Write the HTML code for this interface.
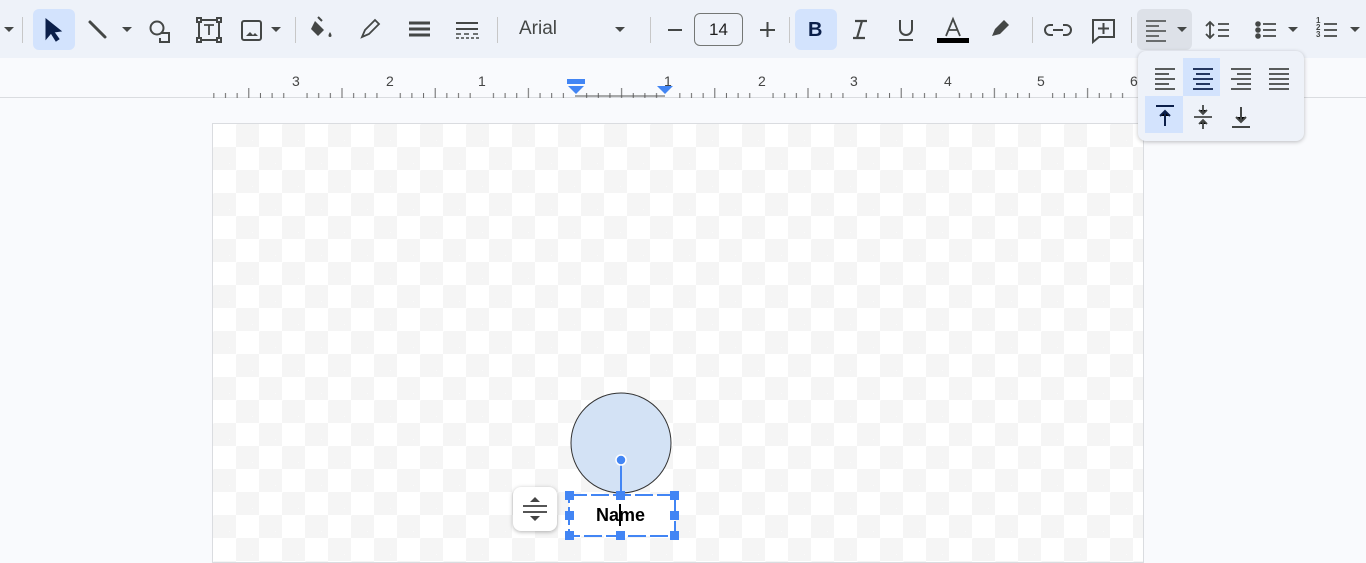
<!DOCTYPE html>
<html><head><meta charset="utf-8"><style>
*{margin:0;padding:0;box-sizing:border-box}
body{width:1366px;height:551px;overflow:hidden;background:#f9fafd;font-family:"Liberation Sans",Arial,sans-serif;position:relative}
.tb{position:absolute;left:0;top:0;width:1366px;height:58px;background:#eef2f9}
.abs{position:absolute}
.sep{position:absolute;top:17px;width:1px;height:26px;background:#c7c7c7}
.ruler{position:absolute;left:0;top:58px;width:1366px;height:40px;background:#f9fafd;border-bottom:1px solid #dadce0}
.page{position:absolute;left:212px;top:123px;width:932px;height:440px;border:1px solid #dadce0;
background-color:#fff;background-image:linear-gradient(45deg,#f5f5f5 25%,transparent 25%,transparent 75%,#f5f5f5 75%),linear-gradient(45deg,#f5f5f5 25%,transparent 25%,transparent 75%,#f5f5f5 75%);background-size:46px 46px;background-position:0 0,23px 23px}
.num{position:absolute;top:73px;font-size:14px;color:#444;}
</style></head><body>
<div class="tb"></div>
<svg class="abs" style="left:0;top:0" width="1366" height="58" fill="none" stroke="#444746" stroke-width="2">
<path d="M4 27l5 5 5-5z" fill="#444746" stroke="none"/>
<rect x="33" y="9" width="42" height="41" rx="6" fill="#d3e3fd" stroke="none"/>
<path d="M46 19l0 20 5-6 5 8 3-2-5-7 7-1z" fill="#0b1f4a" stroke="#0b1f4a" stroke-width="1"/>
<path d="M90 22l15 15" stroke-width="3" stroke-linecap="round"/>
<path d="M122 27l5 5 5-5z" fill="#444746" stroke="none"/>
<circle cx="157" cy="28" r="6.5"/><path d="M161 33h8v9h-9v-4"/>
<rect x="199" y="20" width="20" height="20"/><rect x="197" y="18" width="4" height="4" fill="#eef2f9"/><rect x="217" y="18" width="4" height="4" fill="#eef2f9"/><rect x="197" y="38" width="4" height="4" fill="#eef2f9"/><rect x="217" y="38" width="4" height="4" fill="#eef2f9"/>
<path d="M204 25h10M209 25v10" stroke-width="1.8"/>
<rect x="242" y="21" width="19" height="19" rx="2"/><path d="M246 36l4-4 3 3 2-2 3 3z" fill="#444746" stroke="none"/>
<path d="M271 27l5 5 5-5z" fill="#444746" stroke="none"/>
<path d="M315 21l9 9-6 6-7-7z" fill="#444746" stroke="none"/><path d="M318 17l4 4"/><path d="M330 32c-2 3-2 5 0 5s2-2 0-5z" fill="#444746" stroke="none"/>
<path d="M362 37l3-7 10-10 4 4-10 10z" stroke-width="1.8"/>
<path d="M409 23h21M409 29h21M409 35h21" stroke-width="3"/>
<path d="M456 23h22M456 29h22" stroke-width="2"/><path d="M456 34h5M464 34h5M473 34h5M456 38h3M461 38h3M466 38h3M471 38h3M476 38h3" stroke-width="1.5"/>
<path d="M615 27l5 5 5-5z" fill="#444746" stroke="none"/>
<path d="M668 30h14"/><path d="M760 30h15M767.5 22v15"/>
<rect x="795" y="9" width="42" height="41" rx="6" fill="#d3e3fd" stroke="none"/>
<path d="M855 21h12M853 38h12M862 21l-5 17" stroke-width="2.2"/>
<path d="M900 20v9a6 6 0 0 0 12 0v-9"/><path d="M899 40h14"/>
<path d="M946 36l7-17 7 17M949 30h8" stroke-width="1.8"/><rect x="937" y="38" width="32" height="5" fill="#000" stroke="none"/>
<path d="M992 36l3-7 9-9 5 5-9 9z" fill="#444746" stroke="none"/>
<path d="M1053 25h-3a5 5 0 0 0 0 10h3M1063 25h3a5 5 0 0 1 0 10h-3M1053 30h10"/>
<path d="M1093 20h21v17h-15l-6 5z"/><path d="M1103.5 23v11M1098 28.5h11"/>
<rect x="1137" y="9" width="55" height="41" rx="6" fill="#dde1e8" stroke="none"/>
<path d="M1146 21h20M1146 26h13M1146 31h20M1146 36h13M1146 41h20" stroke-width="1.6"/>
<path d="M1177 27l5 5 5-5z" fill="#444746" stroke="none"/>
<path d="M1210 22v16M1206 26l4-4 4 4M1206 34l4 4 4-4M1218 24h11M1218 30h11M1218 36h11" stroke-width="1.8"/>
<circle cx="1258" cy="24" r="1.8" fill="#444746"/><circle cx="1258" cy="30" r="1.8" fill="#444746"/><circle cx="1258" cy="36" r="1.8" fill="#444746"/>
<path d="M1263 24h13M1263 30h13M1263 36h13" stroke-width="1.8"/>
<path d="M1288 27l5 5 5-5z" fill="#444746" stroke="none"/>
<path d="M1324 24h13M1324 30h13M1324 36h13" stroke-width="1.8"/>
<path d="M1350 27l5 5 5-5z" fill="#444746" stroke="none"/>
</svg>
<div class="sep" style="left:22px"></div><div class="sep" style="left:295px"></div><div class="sep" style="left:497px"></div><div class="sep" style="left:650px"></div><div class="sep" style="left:789px"></div><div class="sep" style="left:1032px"></div><div class="sep" style="left:1131px"></div>
<div class="abs" style="left:519px;top:18px;font-size:19px;color:#444746">Arial</div>
<div class="abs" style="left:694px;top:13px;width:49px;height:33px;border:1px solid #747775;border-radius:6px;font-size:17px;color:#1f1f1f;text-align:center;line-height:31px">14</div>
<div class="abs" style="left:808px;top:19px;font-size:20px;font-weight:bold;color:#0b1f4a">B</div>
<div class="abs" style="left:1316px;top:17px;font-size:8px;line-height:7px;color:#444746;font-weight:bold">1<br>2<br>3</div>
<div class="ruler"></div>
<svg class="abs" style="left:0;top:58px" width="1366" height="40">
<defs><pattern id="t" x="575" y="0" width="93.2" height="40" patternUnits="userSpaceOnUse">
<g stroke="#666" stroke-width="1">
<path d="M11.65 35v5M23.3 35v5M34.95 35v5M58.25 35v5M69.9 35v5M81.55 35v5"/><path d="M46.6 30v10"/></g></pattern></defs>
<rect x="213" y="0" width="925" height="40" fill="url(#t)"/>
<path d="M575 38h90" stroke="#555"/>
<rect x="567" y="21" width="18" height="5" fill="#4285f4"/><path d="M568 28h16l-8 8z" fill="#4285f4"/>
<path d="M657 28h16l-8 8z" fill="#4285f4"/>
</svg>
<div class="num" style="left:292px">3</div><div class="num" style="left:386px">2</div><div class="num" style="left:478px">1</div><div class="num" style="left:664px">1</div><div class="num" style="left:758px">2</div><div class="num" style="left:850px">3</div><div class="num" style="left:944px">4</div><div class="num" style="left:1037px">5</div><div class="num" style="left:1130px">6</div>
<div class="page"></div>
<div class="abs" style="left:1138px;top:51px;width:166px;height:90px;background:#eef2f9;border-radius:8px;box-shadow:0 1px 4px rgba(0,0,0,.25)"></div>
<svg class="abs" style="left:1138px;top:51px" width="166" height="90" stroke="#444746" stroke-width="1.8">
<rect x="45" y="7" width="37" height="38" fill="#d3e3fd" stroke="none"/>
<rect x="7" y="45" width="38" height="37" fill="#d3e3fd" stroke="none"/>
<path d="M17 18h20M17 23h14M17 28h20M17 33h14M17 38h20"/>
<path d="M55 18h20M58 23h14M55 28h20M58 33h14M55 38h20" stroke="#0b1f4a"/>
<path d="M93 18h20M99 23h14M93 28h20M99 33h14M93 38h20"/>
<path d="M131 18h20M131 23h20M131 28h20M131 33h20M131 38h20"/>
<path d="M18 55h18M27 75V60M22 65l5-5 5 5" stroke="#0b1f4a" stroke-width="2"/>
<path d="M56 66h18M65 54v9M61 59l4 4 4-4M65 78v-9M61 73l4-4 4 4"/>
<path d="M94 76h18M103 56v15M98 66l5 5 5-5" stroke-width="2"/>
</svg>
<svg class="abs" style="left:505px;top:385px" width="190" height="166">
<circle cx="116" cy="58" r="50" fill="#d3e2f5" stroke="#333" stroke-width="1"/>
<path d="M116 75v34" stroke="#4285f4" stroke-width="2"/><circle cx="116" cy="75" r="5" fill="#4285f4" stroke="#fff" stroke-width="1.5"/>
<rect x="64" y="110" width="106" height="41" fill="#fff" stroke="#4285f4" stroke-width="2" stroke-dasharray="18 4"/>
<g fill="#4285f4"><rect x="60" y="106" width="9" height="9"/><rect x="111" y="106" width="9" height="9"/><rect x="165" y="106" width="9" height="9"/><rect x="60" y="126" width="9" height="9"/><rect x="165" y="126" width="9" height="9"/><rect x="60" y="146" width="9" height="9"/><rect x="111" y="146" width="9" height="9"/><rect x="165" y="146" width="9" height="9"/></g>
<rect x="8" y="102" width="44" height="44" rx="8" fill="#fff" style="filter:drop-shadow(0 1px 2px rgba(0,0,0,.3))"/>
<path d="M18 121h24M18 127h24" stroke="#555" stroke-width="2"/><path d="M25 117l5-5 5 5zM25 131l5 5 5-5z" fill="#444"/>
</svg>
<div class="abs" style="left:596px;top:505px;font-size:18px;font-weight:bold;color:#000">Name</div>
<div class="abs" style="left:619px;top:504px;width:2px;height:22px;background:#000"></div>
</body></html>
